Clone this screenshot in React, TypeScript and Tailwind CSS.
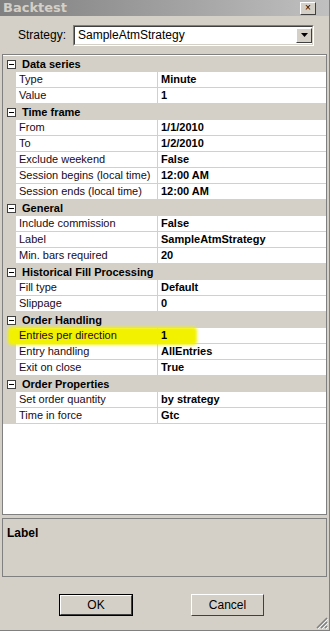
import React from "react";

type Row = { name: string; value: string; hl?: boolean };
type Section = { title: string; rows: Row[] };

const sections: Section[] = [
  { title: "Data series", rows: [{ name: "Type", value: "Minute" }, { name: "Value", value: "1" }] },
  {
    title: "Time frame",
    rows: [
      { name: "From", value: "1/1/2010" },
      { name: "To", value: "1/2/2010" },
      { name: "Exclude weekend", value: "False" },
      { name: "Session begins (local time)", value: "12:00 AM" },
      { name: "Session ends (local time)", value: "12:00 AM" },
    ],
  },
  {
    title: "General",
    rows: [
      { name: "Include commission", value: "False" },
      { name: "Label", value: "SampleAtmStrategy" },
      { name: "Min. bars required", value: "20" },
    ],
  },
  {
    title: "Historical Fill Processing",
    rows: [
      { name: "Fill type", value: "Default" },
      { name: "Slippage", value: "0" },
    ],
  },
  {
    title: "Order Handling",
    rows: [
      { name: "Entries per direction", value: "1", hl: true },
      { name: "Entry handling", value: "AllEntries" },
      { name: "Exit on close", value: "True" },
    ],
  },
  {
    title: "Order Properties",
    rows: [
      { name: "Set order quantity", value: "by strategy" },
      { name: "Time in force", value: "Gtc" },
    ],
  },
];

function MinusBox() {
  return (
    <div className="w-[9px] h-[9px] border border-[#404040] bg-white flex items-center justify-center">
      <div className="w-[5px] h-[1px] bg-black" />
    </div>
  );
}

export default function App() {
  return (
    <div
      className="w-[330px] h-[631px] bg-[#d4d0c8] flex flex-col text-[11px] text-black overflow-hidden border-r border-b border-[#808080]"
      style={{ fontFamily: '"Liberation Sans", Arial, sans-serif' }}
    >
      {/* title bar */}
      <div className="h-[16px] flex items-center justify-between bg-gradient-to-r from-[#808080] to-[#c0c0c0] pl-[3px] pr-[13px] shrink-0">
        <span className="font-bold text-[13px] text-[#d4d0c8]" style={{ fontFamily: '"DejaVu Sans", sans-serif' }}>
          Backtest
        </span>
        <div className="w-[16px] h-[13px] bg-[#d4d0c8] border border-t-white border-l-white border-r-[#404040] border-b-[#404040] flex items-center justify-center text-[10px] leading-none">
          ×
        </div>
      </div>

      {/* strategy */}
      <div className="flex items-center h-[38px] pl-[18px] pr-[15px] shrink-0">
        <span className="w-[55px] text-[12px]">Strategy:</span>
        <div className="flex-1 h-[21px] bg-white border border-t-[#808080] border-l-[#808080] border-r-white border-b-white flex">
          <div className="flex-1 border border-t-[#404040] border-l-[#404040] border-r-[#d4d0c8] border-b-[#d4d0c8] flex items-center pl-[3px] text-[12px]">
            <span className="flex-1">SampleAtmStrategy</span>
            <div className="w-[16px] h-[15px] bg-[#d4d0c8] border border-t-white border-l-white border-r-[#404040] border-b-[#404040] flex items-center justify-center">
              <svg width="7" height="4" viewBox="0 0 7 4">
                <path d="M0 0h7L3.5 4z" fill="#000" />
              </svg>
            </div>
          </div>
        </div>
      </div>

      {/* property grid */}
      <div className="mx-[2px] h-[461px] bg-white border border-[#808080] flex flex-col shrink-0 pt-[1px]">
        {sections.map((s) => (
          <div key={s.title}>
            <div className="h-[16px] bg-[#d4d0c8] flex items-center">
              <div className="w-[17px] flex justify-center">
                <MinusBox />
              </div>
              <span className="font-bold pl-[2px]">{s.title}</span>
            </div>
            {s.rows.map((r) => (
              <div key={r.name} className="h-[16px] flex">
                <div className="w-[13px] bg-[#d4d0c8] shrink-0" />
                <div className="relative w-[142px] border-b border-r border-[#d4d0c8] flex items-center pl-[3px] text-[#1a0a20]">
                  {r.hl && (
                    <div className="absolute left-[-8px] right-[-40px] top-[-1px] bottom-[-2px] bg-[#f2f200] blur-[1.5px] rounded-sm" />
                  )}
                  <span className="relative">{r.name}</span>
                </div>
                <div className="flex-1 border-b border-[#d4d0c8] flex items-center pl-[3px] font-bold">
                  <span className="relative">{r.value}</span>
                </div>
              </div>
            ))}
          </div>
        ))}
      </div>

      {/* description */}
      <div className="mx-[2px] mt-[3px] h-[59px] border border-[#808080] px-[4px] pt-[5px] shrink-0">
        <span className="font-bold text-[12px]">Label</span>
      </div>

      {/* buttons */}
      <div className="flex-1 relative flex items-start pt-[17px]">
        <div className="ml-[59px] w-[74px] h-[22px] border border-black">
          <div className="w-full h-full border border-t-white border-l-white border-r-[#404040] border-b-[#404040] flex items-center justify-center text-[12px]">
            OK
          </div>
        </div>
        <div className="ml-[58px] w-[73px] h-[22px] border border-t-white border-l-white border-r-[#404040] border-b-[#404040] flex items-center justify-center text-[12px]">
          Cancel
        </div>
        <svg className="absolute right-[1px] bottom-[1px]" width="12" height="12" viewBox="0 0 12 12">
          <path d="M11 1L1 11M11 5L5 11M11 9L9 11" stroke="#808080" strokeWidth="1.5" />
          <path d="M12 2L2 12M12 6L6 12M12 10L10 12" stroke="#fff" strokeWidth="0.8" />
        </svg>
      </div>
    </div>
  );
}
